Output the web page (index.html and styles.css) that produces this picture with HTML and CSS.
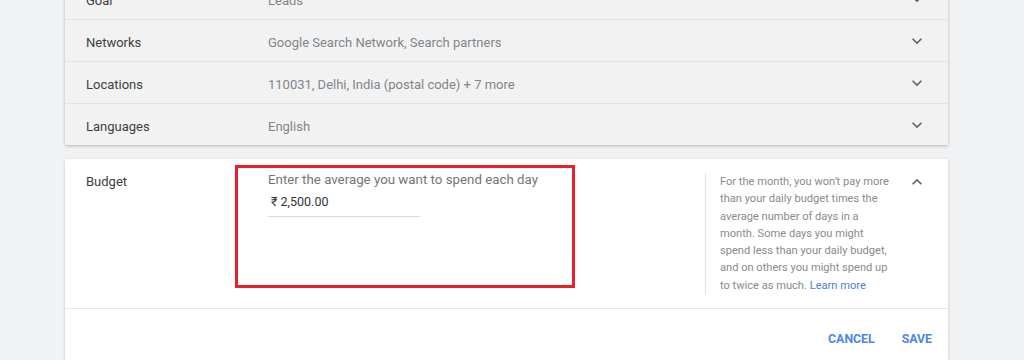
FILE: index.html
```html
<!DOCTYPE html>
<html lang="en">
<head>
    <meta charset="UTF-8">
    <title>Campaign settings - Budget</title>
    <link rel="stylesheet" href="styles.css">
</head>
<body>
    <div class="page">
        <div class="settings-card">
            <div class="setting-row">
                <div class="setting-label">Goal</div>
                <div class="setting-value">Leads</div>
                <svg class="chevron" viewBox="0 0 24 24"><path d="M16.59 8.59L12 13.17 7.41 8.59 6 10l6 6 6-6z"/></svg>
            </div>
            <div class="setting-row">
                <div class="setting-label">Networks</div>
                <div class="setting-value">Google Search Network, Search partners</div>
                <svg class="chevron" viewBox="0 0 24 24"><path d="M16.59 8.59L12 13.17 7.41 8.59 6 10l6 6 6-6z"/></svg>
            </div>
            <div class="setting-row">
                <div class="setting-label">Locations</div>
                <div class="setting-value">110031, Delhi, India (postal code) + 7 more</div>
                <svg class="chevron" viewBox="0 0 24 24"><path d="M16.59 8.59L12 13.17 7.41 8.59 6 10l6 6 6-6z"/></svg>
            </div>
            <div class="setting-row">
                <div class="setting-label">Languages</div>
                <div class="setting-value">English</div>
                <svg class="chevron" viewBox="0 0 24 24"><path d="M16.59 8.59L12 13.17 7.41 8.59 6 10l6 6 6-6z"/></svg>
            </div>
        </div>

        <div class="budget-card">
            <div class="budget-body">
                <div class="budget-label">Budget</div>
                <div class="budget-input">
                    <div class="input-hint">Enter the average you want to spend each day</div>
                    <div class="input-field">₹ 2,500.00</div>
                </div>
                <div class="budget-help">
                    For the month, you won't pay more than your daily budget times the average number of days in a month. Some days you might spend less than your daily budget, and on others you might spend up to twice as much. <a href="#">Learn more</a>
                </div>
                <svg class="chevron up" viewBox="0 0 24 24"><path d="M7.41 15.41L12 10.83l4.59 4.58L18 14l-6-6-6 6z"/></svg>
            </div>
            <div class="budget-actions">
                <button class="text-btn">CANCEL</button>
                <button class="text-btn">SAVE</button>
            </div>
            <div class="highlight"></div>
        </div>
    </div>
</body>
</html>
```

FILE: styles.css
```css
body {
    margin: 0;
    padding: 0;
    background: #f1f2f3;
    font-family: Roboto, 'Noto Sans', sans-serif;
    overflow: hidden;
}
.page {
    width: 883px;
    margin-left: 65px;
    margin-top: -22px;
}
.settings-card {
    background: #f2f2f2;
    box-shadow: 0 1px 3px rgba(0,0,0,0.25);
}
.setting-row {
    display: flex;
    align-items: center;
    height: 41px;
    border-bottom: 1px solid #e4e4e4;
    font-size: 13px;
}
.setting-row:last-child {
    border-bottom: none;
}
.setting-label,
.setting-value {
    padding-top: 3px;
}
.setting-label {
    width: 182px;
    padding-left: 21px;
    color: #3c4043;
}
.setting-value {
    flex: 1;
    color: #80868b;
}
.chevron {
    width: 20px;
    height: 20px;
    fill: #5f6368;
    margin-right: 21px;
}
.budget-card {
    position: relative;
    background: #fff;
    margin-top: 14px;
    box-shadow: 0 1px 3px rgba(0,0,0,0.2);
}
.budget-body {
    display: flex;
    align-items: flex-start;
    padding: 14px 0;
    border-bottom: 1px solid #e8e8e8;
    font-size: 13px;
}
.budget-label {
    width: 182px;
    padding-left: 21px;
    color: #3c4043;
    line-height: 17px;
}
.budget-input {
    width: 437px;
}
.input-hint {
    color: #757575;
    font-size: 13.3px;
    line-height: 14px;
}
.input-field {
    width: 149px;
    margin-top: 7px;
    padding: 0 0 6px 3px;
    border-bottom: 1px solid #dadada;
    color: #333;
    font-size: 12.5px;
    line-height: 16px;
}
.budget-help {
    width: 176px;
    border-left: 1px solid #e0e0e0;
    padding-left: 14px;
    font-size: 11.1px;
    line-height: 17.3px;
    color: #8a8a8a;
}
.budget-help a {
    color: #4a7fe0;
    text-decoration: none;
}
.chevron.up {
    margin-left: auto;
    margin-top: -1px;
}
.budget-actions {
    display: flex;
    justify-content: flex-end;
    gap: 27px;
    padding: 22px 16px 30px 0;
}
.text-btn {
    background: none;
    border: none;
    padding: 0;
    font-family: Roboto, sans-serif;
    font-size: 12.3px;
    font-weight: bold;
    color: #4a86e8;
    line-height: 16px;
    cursor: pointer;
}
.highlight {
    position: absolute;
    left: 170px;
    top: 6px;
    width: 334px;
    height: 117px;
    border: 3px solid #e8202b;
}
```
